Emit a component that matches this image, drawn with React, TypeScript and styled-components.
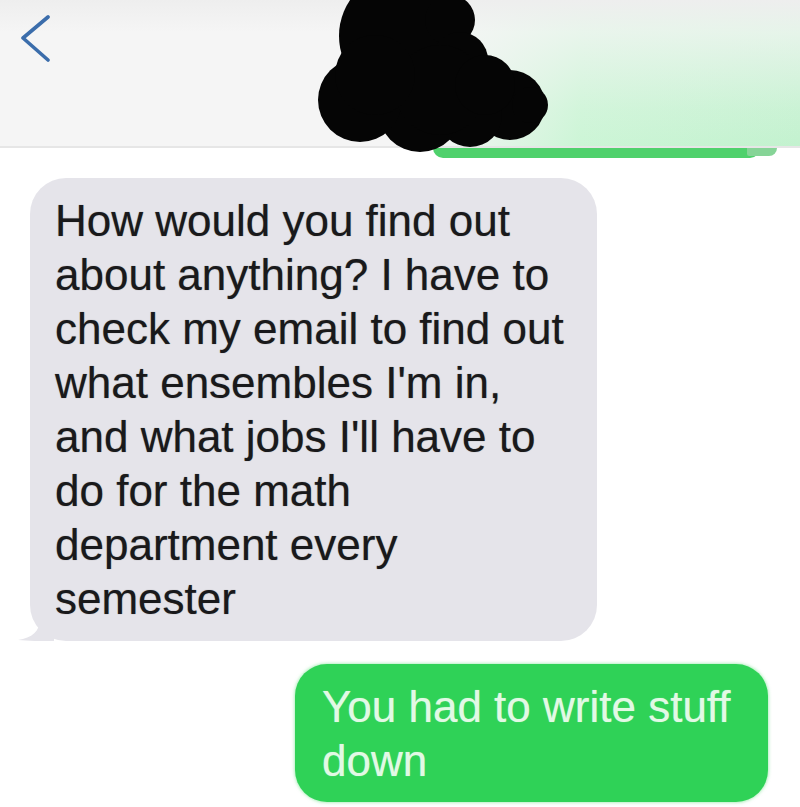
import React from "react";
import styled, { createGlobalStyle } from "styled-components";

const GlobalStyle = createGlobalStyle`
  html, body {
    margin: 0;
    padding: 0;
    background: #ffffff;
  }
  body {
    font-family: "Liberation Sans", Arial, Helvetica, sans-serif;
  }
`;

const Screen = styled.div`
  width: 800px;
  height: 807px;
  overflow: hidden;
  display: flex;
  flex-direction: column;
  background: #ffffff;
`;

const Header = styled.header`
  position: relative;
  height: 148px;
  box-sizing: border-box;
  padding: 15px 0 0 21px;
  display: flex;
  align-items: flex-start;
  border-bottom: 2px solid #e6e6e6;
  background:
    linear-gradient(
      to bottom,
      #eeeeee 0%,
      rgba(245, 245, 245, 0.7) 22%,
      rgba(245, 245, 245, 0.15) 75%,
      rgba(245, 245, 245, 0) 100%
    ),
    linear-gradient(
      to right,
      #f5f5f5 0,
      #f5f5f5 430px,
      #ccf5d6 580px,
      #c3f2cf 100%
    );
`;

const BackButton = styled.button`
  border: 0;
  padding: 0;
  background: transparent;
  width: 30px;
  height: 50px;
  display: flex;
  cursor: pointer;
`;

const Redaction = styled.svg`
  position: absolute;
  left: 300px;
  top: 0;
  width: 260px;
  height: 160px;
  z-index: 2;
`;

const PrevRow = styled.div`
  display: flex;
  justify-content: flex-end;
  padding-right: 23px;
`;

const PrevBubbleEdge = styled.div`
  position: relative;
  width: 327px;
  margin-right: 17px;
  height: 10px;
  background: #4fd16c;
  border-radius: 0 0 10px 10px;

  &::after {
    content: "";
    position: absolute;
    right: -17px;
    top: 0;
    width: 30px;
    height: 8px;
    background: #86d497;
    border-radius: 0 0 14px 4px;
  }
`;

const Thread = styled.main`
  display: flex;
  flex-direction: column;
  padding-top: 20px;
`;

const Bubble = styled.div<{ $sent?: boolean }>`
  position: relative;
  box-sizing: border-box;
  font-size: 44px;
  line-height: 54px;
  letter-spacing: 0;
  ${(p) =>
    p.$sent
      ? `
    align-self: flex-end;
    width: 473px;
    margin: 23px 32px 0 0;
    padding: 16px 0 14px 27px;
    border-radius: 32px;
    background: #2fd257;
    color: #e2f9e5;
    text-shadow: 0 0 1px rgba(220, 250, 225, 0.6);
    box-shadow: 0 0 3px 1px rgba(110, 225, 135, 0.5);
  `
      : `
    align-self: flex-start;
    width: 567px;
    margin: 0 0 0 30px;
    padding: 16px 0 15px 25px;
    border-radius: 36px;
    background: #e5e4ea;
    color: #19191b;
    text-shadow: 0 0 1px rgba(0, 0, 0, 0.45);

    &::before {
      content: "";
      position: absolute;
      left: -12px;
      bottom: 0;
      width: 36px;
      height: 22px;
      background: #e5e4ea;
      clip-path: path("M 22 0 C 22 12 14 19 0 21 C 10 22 22 22 36 22 L 36 0 Z");
    }
  `}
`;

const Line = styled.span`
  display: block;
  white-space: nowrap;
`;

const received = [
  "How would you find out",
  "about anything? I have to",
  "check my email to find out",
  "what ensembles I'm in,",
  "and what jobs I'll have to",
  "do for the math",
  "department every",
  "semester",
];

const sent = ["You had to write stuff", "down"];

const blobs: [number, number, number][] = [
  [103, 36, 64],
  [150, 20, 25],
  [160, 60, 28],
  [210, 105, 35],
  [230, 105, 18],
  [170, 115, 32],
  [120, 110, 42],
  [60, 100, 42],
  [140, 90, 45],
  [75, 75, 40],
  [185, 85, 30],
];

export default function App() {
  return (
    <>
      <GlobalStyle />
      <Screen>
        <Header>
          <BackButton aria-label="Back">
            <svg width="30" height="50" viewBox="0 0 30 50">
              <polyline
                points="27,2 2,23 27,45"
                fill="none"
                stroke="#3b6dab"
                strokeWidth="3.6"
                strokeLinecap="round"
                strokeLinejoin="round"
              />
            </svg>
          </BackButton>
          <Redaction viewBox="0 0 260 160">
            {blobs.map(([cx, cy, r], i) => (
              <circle key={i} cx={cx} cy={cy} r={r} fill="#050505" />
            ))}
          </Redaction>
        </Header>
        <PrevRow>
          <PrevBubbleEdge />
        </PrevRow>
        <Thread>
          <Bubble>
            {received.map((l, i) => (
              <Line key={i}>{l}</Line>
            ))}
          </Bubble>
          <Bubble $sent>
            {sent.map((l, i) => (
              <Line key={i}>{l}</Line>
            ))}
          </Bubble>
        </Thread>
      </Screen>
    </>
  );
}
